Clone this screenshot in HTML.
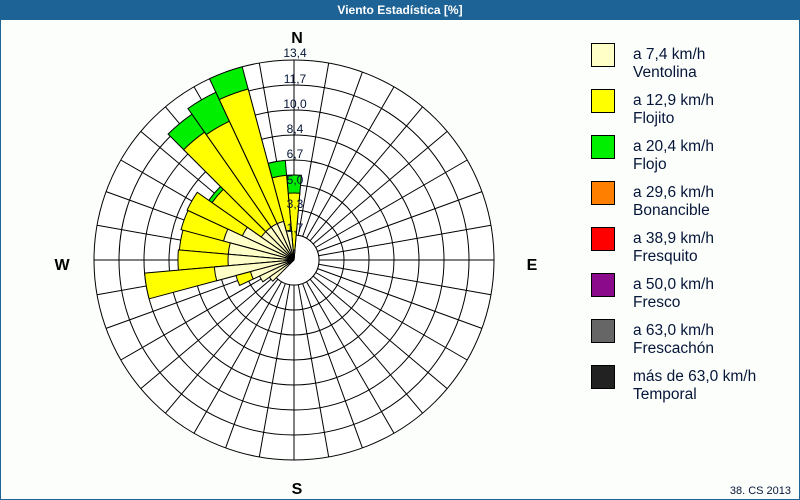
<!DOCTYPE html>
<html><head><meta charset="utf-8"><style>
html,body{margin:0;padding:0;background:#fff}
#w{position:relative;width:798px;height:499px;border:1px solid #1e6396;border-top:none;background:#fcfefc;overflow:hidden;font-family:"Liberation Sans",sans-serif}
#t{position:absolute;left:0;top:0;width:798px;height:20px;background:#1e6396;color:#fff;font-size:12px;font-weight:bold;text-align:center;line-height:20px}
.lb{position:absolute;left:590px;width:22px;height:22px;border:1px solid #000}
.lt{position:absolute;left:632px;font-size:15.5px;line-height:18px;color:#061638}
#f{position:absolute;right:8px;top:485px;font-size:11px;color:#061638}
</style></head><body><div id="w">
<div id="t">Viento Estadística [%]</div>
<svg id="s" width="800" height="500" style="position:absolute;left:0;top:0">
<g id="g"></g>
<g font-family="Liberation Sans,sans-serif" font-size="12" fill="#061638" text-anchor="middle">
<text x="294" y="57">13,4</text><text x="294" y="83">11,7</text><text x="294" y="108">10,0</text><text x="294" y="133">8,4</text><text x="294" y="158">6,7</text><text x="294" y="184">5,0</text><text x="294" y="208">3,3</text><text x="294" y="232">1,7</text>
</g>
<g font-family="Liberation Sans,sans-serif" font-size="16" font-weight="bold" fill="#000" text-anchor="middle">
<text x="296" y="43">N</text><text x="296" y="494">S</text><text x="61" y="270">W</text><text x="531" y="270">E</text>
</g>
</svg>
<div class="lb" style="top:43px;background:#ffffc8"></div><div class="lt" style="top:46px">a 7,4 km/h<br>Ventolina</div>
<div class="lb" style="top:89px;background:#ffff00"></div><div class="lt" style="top:92px">a 12,9 km/h<br>Flojito</div>
<div class="lb" style="top:135px;background:#00ee00"></div><div class="lt" style="top:138px">a 20,4 km/h<br>Flojo</div>
<div class="lb" style="top:181px;background:#ff8000"></div><div class="lt" style="top:184px">a 29,6 km/h<br>Bonancible</div>
<div class="lb" style="top:227px;background:#ff0000"></div><div class="lt" style="top:230px">a 38,9 km/h<br>Fresquito</div>
<div class="lb" style="top:273px;background:#8b0a8b"></div><div class="lt" style="top:276px">a 50,0 km/h<br>Fresco</div>
<div class="lb" style="top:319px;background:#666666"></div><div class="lt" style="top:322px">a 63,0 km/h<br>Frescachón</div>
<div class="lb" style="top:365px;background:#222222"></div><div class="lt" style="top:368px">más de 63,0 km/h<br>Temporal</div>
<div id="f">38. CS 2013</div>
</div>
<script>
var cx=293,cy=260,h='';
function P(r,a){a=a*Math.PI/180;return (cx+r*Math.sin(a)).toFixed(1)+','+(cy-r*Math.cos(a)).toFixed(1);}
h+='<circle cx="'+cx+'" cy="'+cy+'" r="200" fill="#fff" stroke="#000"/>';
for(var k=1;k<8;k++)h+='<circle cx="'+cx+'" cy="'+cy+'" r="'+(25*k)+'" fill="none" stroke="#000"/>';
for(var a=0;a<360;a+=10)h+='<line x1="'+P(25,a).split(',')[0]+'" y1="'+P(25,a).split(',')[1]+'" x2="'+P(200,a).split(',')[0]+'" y2="'+P(200,a).split(',')[1]+'" stroke="#000"/>';
h+='<circle cx="'+cx+'" cy="'+cy+'" r="25" fill="#fff" stroke="#000"/>';
function W(a,r,c){var a1=a-5,a2=a+5;h+='<path d="M'+cx+','+cy+' L'+P(r,a1)+' A'+r+','+r+' 0 0 1 '+P(r,a2)+' Z" fill="'+c+'" stroke="#000" stroke-width="1"/>';}
var d=[[0,10,67,85],[350,30,85,100],[340,40,177,200],[330,40,153,185],[320,40,156,178],[310,40,100,104],[300,57,118,0],[290,73,117,0],[280,66,115,0],[270,66,116,0],[260,80,150,0],[250,45,60,0],[240,38,0,0],[230,30,0,0],[10,0,0,0]];
d.forEach(function(e){if(e[3])W(e[0],e[3],'#00ee00');if(e[2])W(e[0],e[2],'#ffff00');if(e[1])W(e[0],e[1],'#ffffc8');});
document.getElementById('g').innerHTML=h;
</script>
</body></html>
